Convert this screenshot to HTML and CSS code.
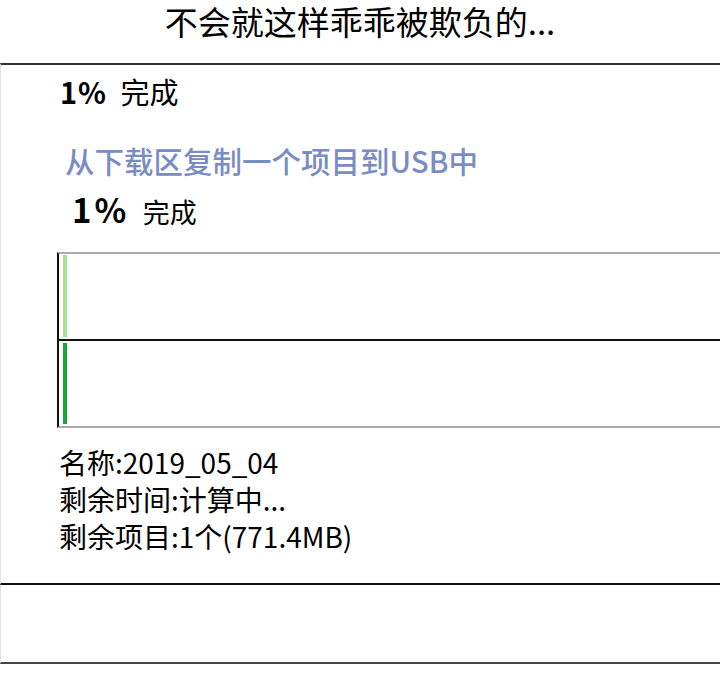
FILE: index.html
```html
<!DOCTYPE html>
<html lang="zh-CN">
<head>
  <meta charset="UTF-8" />
  <title>复制到USB</title>
  <link rel="stylesheet" href="styles.css">
</head>
<body>
<div class="title">不会就这样乖乖被欺负的...</div>
<div class="panel">
  <div class="done first"><b>1%</b> 完成</div>
  <div class="task">从下载区复制一个项目到USB中</div>
  <div class="done second"><b>1%</b> <span>完成</span></div>
  <div class="progress">
    <div class="row"><div class="bar light"></div></div>
    <div class="row"><div class="bar dark"></div></div>
  </div>
  <div class="info">
    <div>名称:2019_05_04</div>
    <div>剩余时间:计算中...</div>
    <div>剩余项目:1个(771.4MB)</div>
  </div>
</div>
<div class="footer"></div>
</body>
</html>
```

FILE: styles.css
```css
* {
  margin: 0;
  padding: 0;
  box-sizing: border-box;
}
body {
  width: 720px;
  background: #fff;
  color: #000;
  font-family: "Noto Sans CJK SC", "Noto Sans", sans-serif;
}
.title {
  height: 63px;
  font-size: 33px;
  line-height: 43px;
  text-align: center;
}
.panel {
  border-top: 2px solid #333;
  border-bottom: 2px solid #111;
  border-left: 1px solid #e2e2e2;
  padding: 6px 0 28px;
  overflow: hidden;
}
.done b {
  font-weight: 700;
}
.done.first {
  margin-left: 59px;
  font-size: 29px;
  line-height: 40px;
}
.done.first b {
  letter-spacing: 1px;
  margin-right: 7px;
}
.task {
  margin: 29px 0 0 64px;
  font-size: 29.5px;
  line-height: 40px;
  font-weight: 500;
  color: #7a8cc6;
}
.done.second {
  margin: 9px 0 0 71px;
  font-size: 33px;
  line-height: 40px;
}
.done.second b {
  letter-spacing: 3px;
  margin-right: 6px;
}
.done.second span {
  font-size: 27px;
}
.progress {
  margin: 20px -4px 0 56px;
  border-top: 2px solid #aaa;
  border-bottom: 2px solid #aaa;
  border-left: 2px solid #111;
}
.row {
  padding: 1px 0 2px 4px;
}
.row + .row {
  border-top: 2px solid #111;
  padding-top: 2px;
}
.bar {
  width: 4px;
  height: 82px;
}
.bar.light {
  background: #a6e29a;
}
.bar.dark {
  height: 81px;
  background: #16a637;
}
.info {
  margin: 16px 0 0 58px;
  font-size: 28px;
  line-height: 37px;
}
.footer {
  height: 79px;
  border-left: 1px solid #e2e2e2;
  border-bottom: 2px solid #444;
}
```
